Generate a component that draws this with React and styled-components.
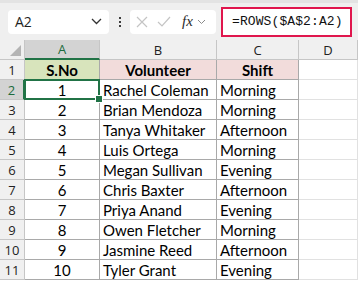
import styled, { createGlobalStyle } from "styled-components";

const GlobalStyle = createGlobalStyle`
  html, body {
    margin: 0;
    padding: 0;
    background: #ffffff;
  }
  body {
    width: 358px;
    height: 282px;
    overflow: hidden;
    font-family: "Open Sans", "Noto Sans", sans-serif;
  }
`;

const rows = [
  [1, "Rachel Coleman", "Morning"],
  [2, "Brian Mendoza", "Morning"],
  [3, "Tanya Whitaker", "Afternoon"],
  [4, "Luis Ortega", "Morning"],
  [5, "Megan Sullivan", "Evening"],
  [6, "Chris Baxter", "Afternoon"],
  [7, "Priya Anand", "Evening"],
  [8, "Owen Fletcher", "Morning"],
  [9, "Jasmine Reed", "Afternoon"],
  [10, "Tyler Grant", "Evening"],
];

const Toolbar = styled.div`
  display: flex;
  align-items: center;
  height: 37px;
  padding: 0 5px 0 8px;
  background: #efefef;
  border-top: 3px solid #e3e3e3;
`;

const NameBox = styled.div`
  display: flex;
  align-items: center;
  justify-content: space-between;
  box-sizing: border-box;
  width: 101px;
  height: 24px;
  padding: 0 7px 0 7px;
  background: #ffffff;
  border-radius: 4px;
  font-size: 14px;
  color: #1f1f1f;
`;

const Dots = styled.div`
  display: flex;
  flex-direction: column;
  gap: 2px;
  margin: 0 9px 0 10px;
  span {
    width: 2px;
    height: 2px;
    background: #3c3c3c;
  }
`;

const FuncBox = styled.div`
  display: flex;
  align-items: center;
  gap: 9px;
  box-sizing: border-box;
  width: 86px;
  height: 24px;
  padding: 0 6px 0 6px;
  background: #ffffff;
  border-radius: 4px;
`;

const Fx = styled.span`
  font-family: "Liberation Serif", serif;
  font-style: italic;
  font-size: 15px;
  color: #2b2b2b;
  margin-left: 2px;
`;

const FormulaBox = styled.div`
  display: flex;
  align-items: center;
  box-sizing: border-box;
  margin-left: 5px;
  width: 131px;
  height: 30px;
  padding-left: 9px;
  background: #ffffff;
  border: 2px solid #e0164d;
  font-family: "Liberation Mono", monospace;
  font-size: 13px;
  color: #111111;
  letter-spacing: 0.1px;
`;

const Sheet = styled.div`
  display: grid;
  grid-template-columns: 25px 75px 117px 82px 59px;
  grid-auto-rows: 20px;
`;

const Corner = styled.div`
  position: relative;
  background: #f0f0f0;
  border-right: 1px solid #c6c6c6;
  border-bottom: 1px solid #c6c6c6;
  &::after {
    content: "";
    position: absolute;
    right: 3px;
    bottom: 3px;
    width: 0;
    height: 0;
    border-left: 11px solid transparent;
    border-bottom: 11px solid #b4b4b4;
  }
`;

const ColHead = styled.div`
  display: flex;
  align-items: center;
  justify-content: center;
  box-sizing: border-box;
  background: ${(p) => (p.$active ? "#d3d3d3" : "#f0f0f0")};
  color: ${(p) => (p.$active ? "#1d6b3d" : "#222222")};
  border-right: 1px solid #c6c6c6;
  border-bottom: ${(p) => (p.$active ? "2px solid #217346" : "1px solid #c6c6c6")};
  font-size: 13px;
`;

const RowHead = styled.div`
  display: flex;
  align-items: center;
  justify-content: center;
  box-sizing: border-box;
  background: ${(p) => (p.$active ? "#d3d3d3" : "#f0f0f0")};
  color: ${(p) => (p.$active ? "#1d6b3d" : "#222222")};
  border-right: ${(p) => (p.$active ? "2px solid #217346" : "1px solid #c6c6c6")};
  border-bottom: 1px solid #c6c6c6;
  font-size: 13px;
`;

const Cell = styled.div`
  position: relative;
  display: flex;
  align-items: center;
  justify-content: ${(p) => (p.$center ? "center" : "flex-start")};
  box-sizing: border-box;
  padding: 0 3px;
  background: ${(p) => p.$bg || "#ffffff"};
  border-right: 1px solid #a9a9a9;
  border-bottom: 1px solid #a9a9a9;
  font-family: "Lato", "Liberation Sans", sans-serif;
  font-size: 15px;
  font-weight: ${(p) => (p.$bold ? 700 : 400)};
  color: #000000;
  white-space: nowrap;
  overflow: hidden;
`;

const EmptyCell = styled.div`
  border-right: 1px solid #e1e1e1;
  border-bottom: 1px solid #e1e1e1;
`;

const Selected = styled(Cell)`
  overflow: visible;
  &::after {
    content: "";
    position: absolute;
    left: -1px;
    top: -1px;
    right: -1px;
    bottom: -1px;
    border: 2px solid #217346;
  }
  &::before {
    content: "";
    position: absolute;
    right: -4px;
    bottom: -4px;
    width: 6px;
    height: 6px;
    background: #217346;
    border: 1px solid #ffffff;
    z-index: 2;
  }
`;

function Chevron() {
  return (
    <svg width="11" height="7" viewBox="0 0 11 7">
      <path d="M1 1 L5.5 5.5 L10 1" fill="none" stroke="#333" strokeWidth="1.3" />
    </svg>
  );
}

export default function App() {
  return (
    <>
      <GlobalStyle />
      <Toolbar>
        <NameBox>
          <span>A2</span>
          <Chevron />
        </NameBox>
        <Dots>
          <span />
          <span />
          <span />
        </Dots>
        <FuncBox>
          <svg width="12" height="12" viewBox="0 0 12 12">
            <path d="M1 1 L11 11 M11 1 L1 11" stroke="#c4c4c4" strokeWidth="1.2" />
          </svg>
          <svg width="14" height="11" viewBox="0 0 14 11">
            <path d="M1 6 L5 10 L13 1" fill="none" stroke="#c4c4c4" strokeWidth="1.2" />
          </svg>
          <Fx>fx</Fx>
          <svg width="9" height="6" viewBox="0 0 9 6" style={{ marginLeft: -5 }}>
            <path d="M1 1 L4.5 4.5 L8 1" fill="none" stroke="#8a8a8a" strokeWidth="1" />
          </svg>
        </FuncBox>
        <FormulaBox>=ROWS($A$2:A2)</FormulaBox>
      </Toolbar>
      <Sheet>
        <Corner />
        <ColHead $active>A</ColHead>
        <ColHead>B</ColHead>
        <ColHead>C</ColHead>
        <ColHead>D</ColHead>

        <RowHead>1</RowHead>
        <Cell $bg="#d8e4bc" $bold $center>S.No</Cell>
        <Cell $bg="#f2dcdb" $bold $center>Volunteer</Cell>
        <Cell $bg="#f2dcdb" $bold $center>Shift</Cell>
        <EmptyCell />

        {rows.map(([n, name, shift], i) => {
          const NumCell = i === 0 ? Selected : Cell;
          return [
            <RowHead key={`h${n}`} $active={i === 0}>{n + 1}</RowHead>,
            <NumCell key={`a${n}`} $center>{n}</NumCell>,
            <Cell key={`b${n}`}>{name}</Cell>,
            <Cell key={`c${n}`}>{shift}</Cell>,
            <EmptyCell key={`d${n}`} />,
          ];
        })}
      </Sheet>
    </>
  );
}
